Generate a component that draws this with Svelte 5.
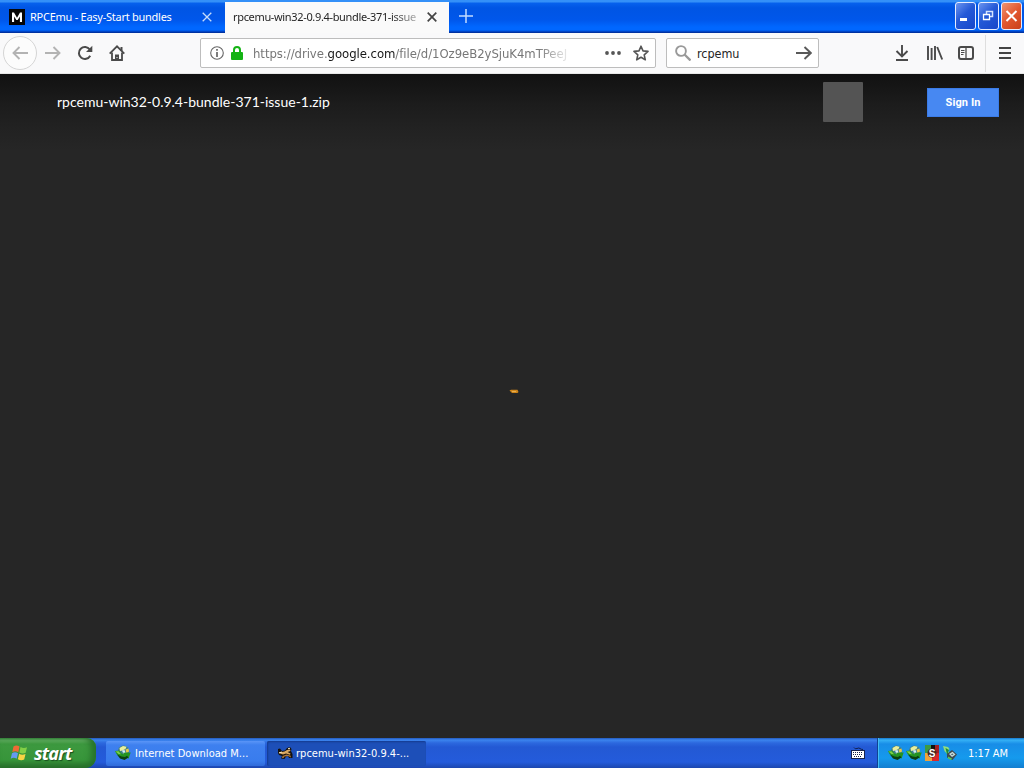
<script>
  const trayGlobes = [0, 1];
</script>

{#snippet globe()}
  <svg class="globe" width="16" height="16" viewBox="0 0 16 16">
    <circle cx="8.5" cy="6.200" r="5.600" fill="#3f7f88" />
    <path d="M4.500 3L8 .9l3.500.8-1 2.300-3 1.500-2.500.5z" fill="#e9ef9c" />
    <path d="M10.500 4.500l3-1 .5 3-2.500 1.500z" fill="#e6c94c" />
    <path d="M7 5.500l2.500-.5 1 2.500L8.500 9z" fill="#d7effa" />
    <path d="M0 6l4-.5 2.500 3L9 9.500l-1-1.700 7.700-.3-2.200 6.300-1.500-1.500L9.500 14 5 12.500 1.500 9z" fill="#249420" />
    <path d="M2 9.500l4.500 2 3.500.5 2-1.200 1.500 1.700L9.500 15 5 13.500z" fill="#0b4210" />
    <path d="M.5 6.500l3-.3 2.500 3-2.500-.2z" fill="#7fcf4a" />
  </svg>
{/snippet}

<div class="screen">
  <header class="titlebar">
    <div class="tab">
      <svg class="fav" width="16" height="16" viewBox="0 0 16 16"><rect width="16" height="16" fill="#060606" /><path d="M3 13V3.500h2l3 5.200 3-5.200h2V13h-2.100V7.400L8.700 11H7.300L5.100 7.400V13z" fill="#fff" /></svg>
      <span class="tabtext one">RPCEmu - Easy-Start bundles</span>
      <svg class="x" width="10" height="10" viewBox="0 0 10 10"><path d="M.7.7l8.600 8.600M9.300.7L.7 9.300" stroke="#c5dcfb" stroke-width="1.300" /></svg>
    </div>
    <div class="tab active">
      <span class="tabtext two">rpcemu-win32-0.9.4-bundle-371-issue</span>
      <svg class="x" width="10" height="10" viewBox="0 0 10 10"><path d="M.7.7l8.600 8.600M9.300.7L.7 9.300" stroke="#444" stroke-width="1.700" /></svg>
    </div>
    <svg class="plus" width="14" height="14" viewBox="0 0 14 14"><path d="M7 0v14M0 7h14" stroke="#c2dcff" stroke-width="1.500" /></svg>
    <div class="controls">
      <div class="ctl"><svg width="20" height="26" viewBox="0 0 20 26"><rect x="4" y="15" width="7" height="3" fill="#fff" /></svg></div>
      <div class="ctl"><svg width="20" height="26" viewBox="0 0 20 26"><path d="M7.500 11V8.500h6v5H11" fill="none" stroke="#d6e4ff" stroke-width="1.500" /><path d="M4.500 11.500h6v5h-6z" fill="none" stroke="#fff" stroke-width="1.300" /></svg></div>
      <div class="ctl close"><svg width="20" height="26" viewBox="0 0 20 26"><path d="M4.500 8l10 10M14.500 8l-10 10" stroke="#fff" stroke-width="2" /></svg></div>
    </div>
  </header>

  <nav class="toolbar">
    <div class="back"><svg width="16" height="14" viewBox="0 0 16 14"><path d="M16 7H1.500M7.500 1l-6 6 6 6" fill="none" stroke="#b3b3b3" stroke-width="1.900" /></svg></div>
    <svg class="fwd" width="16" height="14" viewBox="0 0 16 14"><path d="M0 7h14.500M8.500 1l6 6-6 6" fill="none" stroke="#b3b3b3" stroke-width="1.900" /></svg>
    <svg class="reload" width="16" height="16" viewBox="0 0 16 16"><path d="M13.200 10.800A6 6 0 1 1 12.800 4.500" fill="none" stroke="#4a4a4a" stroke-width="2" /><path d="M15.300.8V7H9z" fill="#4a4a4a" /></svg>
    <svg class="home" width="16" height="16" viewBox="0 0 16 16"><path d="M.7 8.600L8 1.300l7.300 7.300" fill="none" stroke="#4a4a4a" stroke-width="1.800" /><path d="M3 7.500V15h10V7.500" fill="none" stroke="#4a4a4a" stroke-width="1.800" /><path d="M6 15V9.500h4V15z" fill="#4a4a4a" /><path d="M11.500 2h2v4h-2z" fill="#4a4a4a" /><path d="M7.500 12h1v1h-1z" fill="#eee" /></svg>
    <div class="field url">
      <svg width="14" height="14" viewBox="0 0 14 14"><circle cx="7" cy="7" r="6.300" fill="none" stroke="#666" stroke-width="1.100" /><path d="M7 3v1.800M7 6v5" stroke="#666" stroke-width="1.700" /></svg>
      <svg class="lock" width="12" height="14" viewBox="0 0 12 14"><path d="M3 7V4a3 3 0 0 1 6 0v3" fill="none" stroke="#14b314" stroke-width="2" /><rect y="6" width="12" height="8" rx="1" fill="#14b314" /></svg>
      <span class="address">https://drive.<b>google.com</b>/file/d/1Oz9eB2ySjuK4mTPeeJ</span>
      <svg class="dots" width="16" height="4" viewBox="0 0 16 4"><g fill="#565656"><circle cx="2" cy="2" r="1.900" /><circle cx="8" cy="2" r="1.900" /><circle cx="14" cy="2" r="1.900" /></g></svg>
      <svg class="star" width="16" height="16" viewBox="0 0 16 16"><path d="M8 1.200l2 4.700 5 .5-3.800 3.400 1.100 5L8 12.200l-4.300 2.600 1.100-5L1 6.400l5-.5z" fill="none" stroke="#555" stroke-width="1.600" stroke-linejoin="round" /></svg>
    </div>
    <div class="field search">
      <svg width="16" height="16" viewBox="0 0 16 16"><circle cx="6" cy="6" r="4.900" fill="none" stroke="#999" stroke-width="1.900" /><path d="M9.500 9.500l6 6" stroke="#999" stroke-width="2.300" /></svg>
      <span class="query">rcpemu</span>
      <svg width="16" height="14" viewBox="0 0 16 14"><path d="M0 7h15M8.500 1l6.300 6-6.300 6" fill="none" stroke="#595959" stroke-width="1.900" /></svg>
    </div>
    <div class="tools">
      <svg width="14" height="16" viewBox="0 0 14 16"><path d="M7 0v11M1.500 6L7 11.500 12.500 6M1 15h12" fill="none" stroke="#4a4a4a" stroke-width="1.900" /></svg>
      <svg class="lib" width="16" height="14" viewBox="0 0 16 14"><path d="M1 0v14M4.600 2v12M8 0v14M10.200 1l5 12.500" fill="none" stroke="#4a4a4a" stroke-width="1.900" /></svg>
      <svg class="side" width="16" height="14" viewBox="0 0 16 14"><rect x="1" y="1" width="14" height="12" rx="2" fill="none" stroke="#4a4a4a" stroke-width="2" /><path d="M8 1v12" stroke="#4a4a4a" stroke-width="1.300" /><path d="M3 4.500h3.500M3 6.500h3.500M3 8.500h2.500" stroke="#4a4a4a" /></svg>
      <div class="menu"><svg width="12" height="12" viewBox="0 0 12 12"><path d="M0 1h12M0 6h12M0 11h12" stroke="#444" stroke-width="2" /></svg></div>
    </div>
  </nav>

  <main>
    <div class="drivebar">
      <span class="filename">rpcemu-win32-0.9.4-bundle-371-issue-1.zip</span>
      <div class="placeholder"></div>
      <div class="signin"><span>Sign In</span></div>
    </div>
    <div class="loader"><svg width="10" height="5" viewBox="0 0 10 5"><path d="M.5 1.500L2 .7h6.500l1 2.200-1 1H3z" fill="#cf8518" /><path d="M3 2h4v1H3z" fill="#e6ae52" /></svg></div>
  </main>

  <footer class="taskbar">
    <div class="start">
      <svg width="19" height="18" viewBox="0 0 19 18"><path d="M3.500 2.500q3-2.200 6 .1L8.300 8.200q-3-2-6 0z" fill="#f06a35" /><path d="M10.500 3q3 1.900 6.500.3l-1.300 5.500q-3.200 1.400-6.300-.2z" fill="#82cf46" /><path d="M2 9.300q3-2 6 0l-1.300 5.400q-3-2-6 0z" fill="#659af0" /><path d="M9.200 9.800q3 1.700 6.300.2l-1.300 5.500q-3.200 1.600-6.300-.3z" fill="#f8d444" /></svg>
      <span>start</span>
    </div>
    <div class="task first">{@render globe()}<span>Internet Download M...</span></div>
    <div class="task pressed">
      <svg width="16" height="16" viewBox="0 0 16 16"><path d="M1 4l2-.5L5 6l3-.5L10 3l3-1 1.500 2L14 6l1.500 3v4H12l-1-2-2 .5L7.500 14 4 13.500 5 11 2 10 1 8z" fill="#15110d" /><path d="M1.500 8L5 7l2.500-.5L10 5l3-.5.5 1.500-3 1 3 1.500-.5 1.300-4-1.300-3 1z" fill="#d9a862" /><path d="M5.500 11l4-1.500 4 1 .5 2-3-1.500-3.500.5-1 1.500H5z" fill="#a8743a" /><path d="M2 7.800l3-.8M11 3.800l2-.6" stroke="#fff0c7" /></svg>
      <span>rpcemu-win32-0.9.4-...</span>
    </div>
    <svg class="keyboard" width="14" height="14" viewBox="0 0 14 14"><path d="M3 1.500q1 2 3 1t3 0 3 1" fill="none" stroke="#102050" /><rect x=".5" y="4.500" width="13" height="8" fill="#fff" stroke="#17224b" /><path d="M2 6.500h10M2 8.500h10M3 10.500h8" stroke="#17224b" stroke-dasharray="1 1" /></svg>
    <div class="tray">
      {#each trayGlobes as item (item)}{@render globe()}{/each}
      <svg width="16" height="16" viewBox="0 0 16 16"><path d="M1 0h6v8H1z" fill="#3d9a43" /><path d="M7 0h4v8H7z" fill="#111" /><path d="M1 8h7v8H1z" fill="#efa33b" /><path d="M8 8h7v8H8z" fill="#d8272c" /><path d="M11 0h4v8h-4z" fill="#a31f22" /><circle cx="8" cy="8" r="4.500" fill="#482720" /><text x="4.700" y="12" class="badge">S</text></svg>
      <svg width="16" height="16" viewBox="0 0 16 16"><path d="M1 1l5 1 1.500 2L6 6l2 3-2 1-3.500-4z" fill="#8fdc80" /><path d="M3.500 3L7 5l-1 2 1 3-2-.5z" fill="#1f8a35" /><path d="M5 9l5-4 5 4.500L10.500 15 5 12.500z" fill="#3d4a50" /><path d="M7 9l3.500-2.200L13.500 9.500 10 12z" fill="#c8dada" /><path d="M9 9.300l1.500-.8 1 1-1.500.8z" fill="#4c6a70" /><path d="M6 11.500l4 2-1 1.500-3-1.500z" fill="#58c84d" /></svg>
      <span class="clock">1:17 AM</span>
    </div>
  </footer>
</div>

<style>
  :global(body) { background: #262626; overflow: hidden; }
  .screen { width: 1024px; height: 768px; display: flex; flex-direction: column; overflow: hidden; font-family: "DejaVu Sans Condensed", "DejaVu Sans", sans-serif; background: #262626; }
  svg { display: block; flex: none; }
  span { white-space: nowrap; }
  .titlebar { height: 33px; flex: none; box-sizing: border-box; padding-top: 2px; display: flex; align-items: stretch; background: linear-gradient(#3490f8 0 2px, #0761ed 3px, #0055e4 8px, #0057eb 20px, #0067ff 27px, #0067ff 30px, #0038b2 32px, #002b91 33px); }
  .tab { width: 225px; box-sizing: border-box; display: flex; align-items: center; padding-left: 9px; padding-bottom: 1px; color: #fff; font-size: 11px; }
  .active { width: 224px; padding-left: 8px; background: #fafafa; color: #252525; }
  .tabtext { display: block; line-height: 16px; font-family: "Noto Sans", sans-serif; }
  .one { width: 172px; margin-left: 5px; letter-spacing: -.26px; }
  .two { width: 188px; margin-right: 6px; letter-spacing: -.34px; -webkit-mask: linear-gradient(90deg, #000 158px, transparent 196px); mask: linear-gradient(90deg, #000 158px, transparent 196px); }
  .plus { margin: 7px 0 0 10px; }
  .controls { display: flex; gap: 2px; margin: 0 2px 0 auto; align-items: flex-start; }
  .ctl { width: 21px; height: 28px; box-sizing: border-box; border: 1px solid #e7edff; border-radius: 3px; background: linear-gradient(135deg, #6b94ef, #2459d7 45%, #1746ca); overflow: hidden; }
  .close { background: linear-gradient(135deg, #ef9470, #e2572f 50%, #c93f1a); }
  .toolbar { height: 41px; flex: none; box-sizing: border-box; display: flex; align-items: center; background: #f9f9fa; border-bottom: 1px solid #e7e7e7; }
  .back { width: 34px; height: 34px; box-sizing: border-box; margin-left: 3px; border: 1px solid #d5d5d5; border-radius: 50%; display: grid; place-items: center; background: #fcfcfc; }
  .fwd { margin-left: 8px; }
  .reload { margin-left: 16px; }
  .home { margin-left: 16px; }
  .field { height: 30px; box-sizing: border-box; border: 1px solid #bdbdbd; border-radius: 2px; background: #fff; display: flex; align-items: center; }
  .url { width: 456px; margin-left: 75px; padding-left: 9px; }
  .lock { margin-left: 7px; }
  .address { width: 320px; margin-left: 10px; color: #777; font-size: 13px; letter-spacing: -.05px; -webkit-mask: linear-gradient(90deg, #000 285px, transparent 320px); mask: linear-gradient(90deg, #000 285px, transparent 320px); }
  .address b { color: #171717; font-weight: 400; }
  .dots { margin-left: 32px; }
  .star { margin-left: 12px; }
  .search { width: 153px; margin-left: 10px; padding-left: 8px; }
  .query { width: 99px; margin-left: 6px; font-size: 12.500px; letter-spacing: -.05px; color: #252525; }
  .tools { margin-left: auto; display: flex; align-items: center; height: 100%; }
  .lib { margin-left: 18px; }
  .side { margin-left: 15px; }
  .menu { height: 37px; width: 39px; box-sizing: border-box; margin-left: 11px; padding-left: 13px; border-left: 1px solid #dedede; display: flex; align-items: center; }
  main { height: 664px; flex: none; background: #262626; }
  .drivebar { height: 76px; box-sizing: border-box; padding: 8px 25px 0 57px; display: flex; align-items: flex-start; background: linear-gradient(#111 0, #1c1c1c 30px, #222 55px, #262626 76px); }
  .filename { margin-top: 10px; line-height: 20px; color: #fff; font-family: Lato, sans-serif; font-size: 14px; }
  .placeholder { width: 40px; height: 40px; margin-left: auto; background: #545454; border-radius: 1px; }
  .signin { width: 72px; height: 29px; margin: 6px 0 0 64px; box-sizing: border-box; border: 1px solid #3b7ce8; background: #4788f2; color: #fff; font: 700 11px/27px Roboto, sans-serif; letter-spacing: .1px; text-align: center; }
  .loader { display: flex; justify-content: center; padding: 239px 0 0 4px; }
  .taskbar { height: 30px; flex: none; display: flex; align-items: center; background: linear-gradient(#2359bb 0, #3b84ee 2px, #2c68de 5px, #2359d4 9px, #245bdb 24px, #1c46ae 30px); }
  .start { width: 96px; height: 30px; box-sizing: border-box; padding-left: 10px; display: flex; align-items: center; border-radius: 0 9px 11px 0; background: linear-gradient(#3d8b45 0, #64b164 2px, #3d993f 6px, #37953a 22px, #276c2a 30px); box-shadow: inset -5px 0 6px #27732b; color: #fff; }
  .start span { margin: -1px 0 0 5px; font: italic 700 18px/24px "Noto Sans", sans-serif; letter-spacing: -.8px; text-shadow: 1px 1px 1px #174f1d; }
  .task { height: 25px; width: 159px; box-sizing: border-box; padding-left: 9px; display: flex; align-items: center; gap: 4px; border-radius: 2px; background: linear-gradient(#5a95f7, #3e80ef 4px, #397ced 20px, #306bda); color: #fff; font-size: 11px; }
  .first { margin-left: 10px; }
  .pressed { margin-left: 2px; padding-left: 10px; gap: 3px; background: #1d4fb8; box-shadow: inset 1px 1px 2px #153b8e; }
  .first span { letter-spacing: .03px; }
  .pressed span { letter-spacing: .02px; }
  .keyboard { margin-left: auto; margin-right: 12px; }
  .tray { width: 147px; height: 30px; box-sizing: border-box; padding-left: 10px; display: flex; align-items: center; gap: 2px; border-left: 1px solid #104393; box-shadow: inset 1px 0 #45bdf4; background: linear-gradient(#1676cb 0, #35b1f5 2px, #188de7 6px, #159aed 20px, #137ed0 30px); color: #fff; }
  .badge { fill: #fff; font: 700 10px "Liberation Sans", sans-serif; }
  .clock { font-size: 11px; margin-left: 8px; letter-spacing: -.1px; }
</style>
